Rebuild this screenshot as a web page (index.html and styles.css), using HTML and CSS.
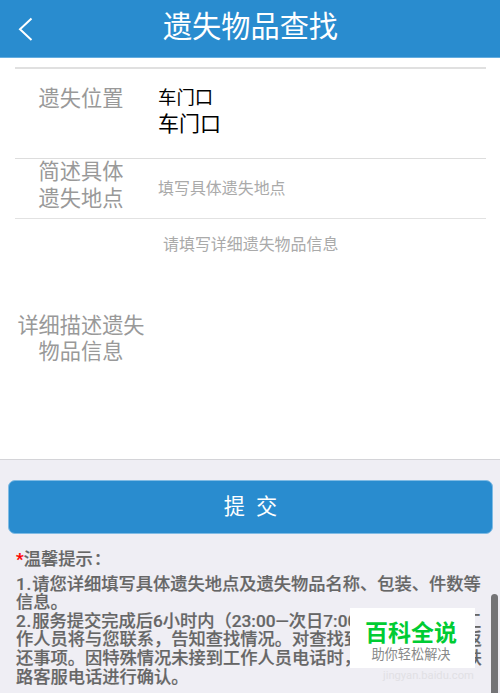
FILE: index.html
```
<!DOCTYPE html>
<html lang="zh-CN">
<head>
  <meta charset="UTF-8">
  <meta name="viewport" content="width=device-width, initial-scale=1">
  <title>遗失物品查找</title>
  <link rel="stylesheet" href="styles.css">
</head>
<body>

  <header class="topbar">
    <a class="back" href="#">
      <svg width="16" height="26" viewBox="0 0 16 26" fill="none" stroke="#fff" stroke-width="2">
        <path d="M13.5 2.5L2 13.3L13.5 24"/>
      </svg>
    </a>
    <h1>遗失物品查找</h1>
  </header>

  <main class="form">
    <div class="row place">
      <div class="label">遗失位置</div>
      <div class="value">
        <div class="chosen">车门口</div>
        <div class="option">车门口</div>
      </div>
    </div>
    <div class="row spot">
      <div class="label">简述具体<br>遗失地点</div>
      <div class="value hint">填写具体遗失地点</div>
    </div>
    <div class="row detail">
      <div class="label">详细描述遗失<br>物品信息</div>
      <div class="value hint">请填写详细遗失物品信息</div>
    </div>
  </main>

  <button class="submit">提 交</button>

  <section class="tips">
    <h2><span class="star">*</span>温馨提示<span class="colon">：</span></h2>
    <p><span class="num">1.</span>请您详细填写具体遗失地点及遗失物品名称、包装、件数等<br>信息。</p>
    <p><span class="num">2.</span>服务提交完成后6小时内（23:00—次日7:00除外），<span class="tail">工</span><br>作人员将与您联系，告知查找情况。对查找到的物品协商归返<br>还事项。因特殊情况未接到工作人员电话时，请您及时拨打铁<br>路客服电话进行确认。</p>
  </section>

  <div class="source">jingyan.baidu.com</div>
  <div class="badge">
    <strong>百科全说</strong>
    <span>助你轻松解决</span>
  </div>
  <div class="scrollbar"></div>

</body>
</html>
```

FILE: styles.css
```
* {
  box-sizing: border-box;
}
body {
  margin: 0;
  height: 693px;
  position: relative;
  overflow: hidden;
  background: #efeef4;
  font-family: Roboto, "Noto Sans CJK SC", sans-serif;
}
.topbar {
  height: 58px;
  display: flex;
  align-items: center;
  background: #298ccf;
  border-bottom: 1px solid #64ade0;
  color: white;
}
.back {
  width: 42px;
  height: 26px;
  padding-left: 18px;
}
h1 {
  flex: 1;
  margin: 0 42px 4px 0;
  padding-left: 1px;
  font-size: 29.2px;
  font-weight: 400;
  line-height: 40px;
  text-align: center;
}
.form {
  height: 402px;
  padding: 9px 14px 0 15px;
  background: white;
  border-bottom: 1px solid #d4d4d8;
}
.row {
  display: flex;
}
.label {
  width: 132px;
  font-size: 21.2px;
  line-height: 26.5px;
  color: #999;
  text-align: center;
}
.value {
  padding-left: 11px;
  color: black;
}
.place {
  height: 92px;
  padding-top: 16px;
  border-top: 2px solid #e0e0e0;
  border-bottom: 1px solid #ddd;
}
.place .label {
  padding-top: 1px;
}
.chosen {
  font-size: 18.4px;
  line-height: 26px;
}
.option {
  font-size: 21px;
  line-height: 26px;
}
.spot {
  height: 60px;
  align-items: center;
  border-bottom: 1px solid #e2e2e2;
}
.spot .label {
  margin-top: -6px;
}
.hint {
  font-size: 15.95px;
  line-height: 24px;
  color: #aaa;
}
.detail .label {
  margin-top: 93.5px;
}
.detail .hint {
  padding: 14px 0 0 16px;
}
.submit {
  display: block;
  width: 485px;
  height: 54px;
  margin: 20px 0 0 8px;
  padding: 0 0 5px;
  border: 1px solid #80bbe4;
  border-radius: 7px;
  background: #298ccf;
  color: white;
  font-family: inherit;
  font-size: 21.2px;
  word-spacing: 6px;
}
.tips {
  padding: 16px 0 0 16px;
  font-size: 17.25px;
  font-weight: 500;
  line-height: 18.6px;
  color: #666;
  white-space: nowrap;
  -webkit-text-stroke: 0.2px #666;
}
.tips h2 {
  margin: 0 0 6px;
  font-size: inherit;
  font-weight: inherit;
}
.tips p {
  margin: 0;
}
.star {
  color: red;
  -webkit-text-stroke-color: red;
}
.colon {
  padding-left: 1px;
}
.num {
  letter-spacing: 0.8px;
}
.tail {
  position: absolute;
  left: 464px;
}
.badge {
  position: absolute;
  left: 350px;
  top: 608px;
  width: 125px;
  height: 60px;
  padding-top: 11px;
  background: white;
  text-align: center;
}
.badge strong {
  display: block;
  margin-left: -3px;
  font-size: 23px;
  line-height: 29px;
  color: #0c3;
}
.badge span {
  display: block;
  margin-left: -3px;
  font-size: 13.2px;
  line-height: 14px;
  color: #888;
}
.source {
  position: absolute;
  left: 383px;
  top: 669px;
  font-size: 11.2px;
  line-height: 14px;
  color: #e1e0e4;
}
.scrollbar {
  position: absolute;
  left: 491px;
  top: 594px;
  width: 7px;
  height: 110px;
  border-radius: 4px;
  background: #747476;
}
```
